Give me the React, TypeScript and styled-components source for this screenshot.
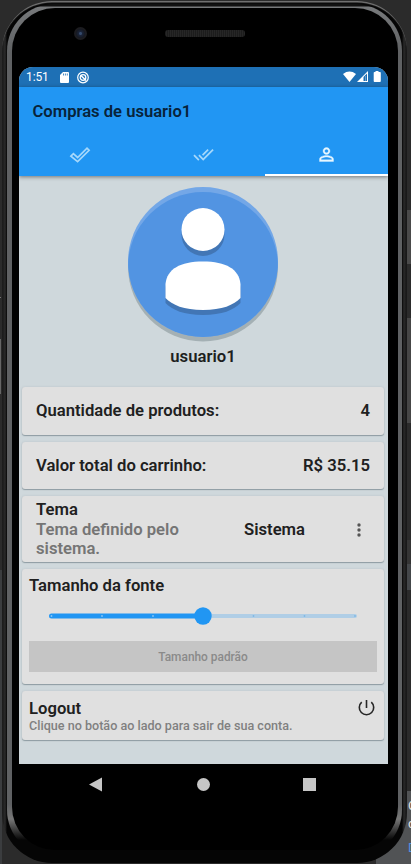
import React from "react";
import styled, { createGlobalStyle } from "styled-components";

const Global = createGlobalStyle`
  * { box-sizing: border-box; }
  body { margin: 0; background: #2b2b2b; font-family: Roboto, "Noto Sans", sans-serif; overflow: hidden; }
  svg { display: block; flex: none; }
`;
const Desk = styled.div`
  position: relative; width: 411px; height: 864px; overflow: hidden; background: #2b2b2b;
  padding: 1px 4px 0 2px;
`;
const Panel = styled.div`
  position: absolute; right: 0; bottom: 0; width: 35px; height: 73px; background: #515355;
`;
const PanelText = styled.span<{ $top: number; $blue?: boolean }>`
  position: absolute; left: 32px; top: ${p => p.$top}px; font-size: 13px; line-height: 16px;
  color: ${p => (p.$blue ? "#4f8fe0" : "#e0e0e0")};
`;
const EdgeStrip = styled.i<{ $side: "left" | "right"; $top: number; $h: number; $c: string; $w: number }>`
  position: absolute; ${p => p.$side}: 0; top: ${p => p.$top}px;
  width: ${p => p.$w}px; height: ${p => p.$h}px; background: ${p => p.$c};
`;
const Shell = styled.div`
  position: relative; width: 405px; height: 862px; padding: 3px 5px 5px 5px; border-radius: 50px;
  background: linear-gradient(90deg, #151515 0, #2b2b2b 3px, #050505 5px, #050505 400px, #2a2a2a 402px, #111 405px);
  box-shadow: inset 0 2px 1px -0.5px #777;
`;
const Rim = styled.div`
  height: 853px; padding: 4px 5px 7px 5px; border-radius: 47px;
  background: linear-gradient(180deg, #111 0, #111 2px, #77797b 3px, #5f6163 50px, #5f6163 800px, #777 815px, #050505 836px);
`;
const Face = styled.div`
  height: 842px; padding: 0 8px 0 7px; border-radius: 43px; background: #000;
  margin-right: -1px; display: flex; flex-direction: column;
`;
const Bezel = styled.div`
  height: 59px; flex: none; display: flex; padding: 19px 0 0 55px; gap: 78px; align-items: flex-start;
`;
const Camera = styled.i`
  width: 13px; height: 13px; border-radius: 50%; border: 2px solid #1c1c20;
  background: radial-gradient(circle, #34496b 0 1px, #1a2338 2px, #15171d 5px);
`;
const Speaker = styled.i`
  width: 80px; height: 7px; margin-top: 3px; border-radius: 3px;
  background: repeating-linear-gradient(90deg, #1c1c1c 0 1px, #262626 1px 2px);
`;
const Screen = styled.div`
  width: 369px; height: 697px; flex: none; overflow: hidden; border-radius: 14px 14px 0 0;
  background: #cfd8dc; display: flex; flex-direction: column;
`;
const Status = styled.div`
  height: 20px; flex: none; background: #1e70b5; color: #fff; font-size: 12px; display: flex;
  align-items: center; padding: 0 7px;
`;
const Clock = styled.span`width: 34px; letter-spacing: -.1px;`;
const StatusIcons = styled.div`margin-left: auto; display: flex; align-items: center;`;
const AppBar = styled.header`
  height: 89px; flex: none; background: #2196f3; box-shadow: 0 1px 4px rgba(0,0,0,.45);
  display: flex; flex-direction: column; z-index: 1;
`;
const Title = styled.h1`
  margin: 0; height: 48px; line-height: 49px; padding-left: 13.5px; font-size: 16.6px; font-weight: 600; color: #08233a;
`;
const Tabs = styled.nav`display: grid; grid-template-columns: 122.5px 123px 123.5px; flex: 1;`;
const Tab = styled.div<{ $on?: boolean }>`
  display: flex; align-items: center; justify-content: center; color: ${p => (p.$on ? "#e8f7ff" : "#a6d8fb")};
  border-bottom: 2px solid ${p => (p.$on ? "#fff" : "transparent")};
`;
const Profile = styled.section`
  height: 209px; padding: 11px 1px 0 0; display: flex; flex-direction: column; align-items: center;
`;
const Name = styled.strong`
  margin-top: 5px; font-size: 16.7px; line-height: 20px; font-weight: 600; color: #1d1f20;
`;
const Cards = styled.main`display: flex; flex-direction: column; gap: 7px; padding: 2px 4px 0 3px;`;
const Card = styled.section<{ $h: number; $pad: string }>`
  height: ${p => p.$h}px; padding: ${p => p.$pad}; border-radius: 3px; background: #e0e0e0;
  box-shadow: 0 1px 1px rgba(70,90,100,.45), 0 0 2px rgba(110,130,140,.25);
`;
const Row = styled.div`display: flex; align-items: center; justify-content: space-between; height: 100%;`;
const Label = styled.div<{ $muted?: boolean }>`
  font-size: 16.65px; line-height: 19.5px; font-weight: 600; color: ${p => (p.$muted ? "#757575" : "#202020")};
`;
const ThemeText = styled.div`width: 208px; padding-right: 38px;`;
const Current = styled(Label)`flex: 1;`;
const SliderBox = styled.div`height: 36px; margin-top: 2px; padding: 0 20px; display: flex; align-items: center;`;
const Wide = styled.button`
  display: block; width: 100%; height: 31px; border: 0; padding: 1px 0 0; background: #c5c5c5; color: #8a8a8a;
  font: 500 11.9px Roboto, sans-serif; margin-top: 7px;
`;
const Note = styled.div`font-size: 12.6px; line-height: 15px; font-weight: 500; color: #808080; white-space: nowrap;`;
const LogoutRow = styled.div`display: flex; justify-content: space-between; height: 19px;`;
const NavBar = styled.footer`
  width: 369px; height: 40px; display: grid; grid-template-columns: 154px 61px 151px; align-items: center; justify-items: center;
`;

const Avatar = () => (
  <svg width="150" height="155" viewBox="0 0 150 155">
    <defs><clipPath id="disc"><circle cx="75" cy="75" r="75" /></clipPath></defs>
    <circle cx="75" cy="79.500" r="75" fill="#a4b0b4" />
    <circle cx="75" cy="75" r="75" fill="#73a7e7" />
    <circle cx="75" cy="80" r="75" fill="#5294e2" clipPath="url(#disc)" />
    <circle cx="75" cy="47.500" r="21.500" fill="#4276b5" />
    <circle cx="75" cy="42.500" r="21.500" fill="#fff" />
    <path d="M37.500 116V102C37.500 88 53 79 75 79S112.500 88 112.500 102V116C106 123 94 128 75 128S44 123 37.500 116Z" fill="#4276b5" />
    <path d="M37.500 111V97C39 82 52 74.500 75 74.500S111 82 112.500 97V111C106 118 94 123 75 123S44 118 37.500 111Z" fill="#fff" />
  </svg>
);

export default function App() {
  return (
    <Desk>
      <Global />
      <Panel>
        <PanelText $top={7}>C</PanelText>
        <PanelText $top={25}>d</PanelText>
        <PanelText $top={49} $blue>D</PanelText>
      </Panel>
      <EdgeStrip $side="left" $top={297} $h={1} $c="#777" $w={1} />
      <EdgeStrip $side="left" $top={339} $h={55} $c="#666" $w={1} />
      <EdgeStrip $side="left" $top={570} $h={294} $c="#3b3d3f" $w={2} />
      <EdgeStrip $side="right" $top={210} $h={54} $c="#4a4a4a" $w={4} />
      <EdgeStrip $side="right" $top={318} $h={105} $c="#464646" $w={4} />
      <EdgeStrip $side="right" $top={540} $h={24} $c="#353535" $w={4} />
      <EdgeStrip $side="right" $top={564} $h={26} $c="#44474a" $w={4} />
      <Shell>
        <Rim>
          <Face>
            <Bezel><Camera /><Speaker /></Bezel>
            <Screen>
              <Status>
                <Clock>1:51</Clock>
                <svg width="9" height="11" viewBox="0 0 9 11"><path d="M3 0h5q1 0 1 1v9q0 1-1 1H1q-1 0-1-1V3Z" fill="#fff" /><path d="M3.500 1.500v2M5.400 1.500v2M7.300 1.500v2" stroke="#1e70b5" strokeWidth=".8" /></svg>
                <svg width="21" height="13" viewBox="-8 0 21 13" fill="none" stroke="#fff"><circle cx="6" cy="6.500" r="5.300" strokeWidth="1.200" /><circle cx="6" cy="6.500" r="2.800" strokeWidth="1.300" /><path d="m3.500 4 5.500 5.500" strokeWidth="1.500" /></svg>
                <StatusIcons>
                  <svg width="38" height="12" viewBox="0 0 38 12"><path d="M0 3Q6.500-1.800 13 3L6.500 11Z" fill="#fff" /><path d="M14 11 25 0v11Z" fill="#fff" /><path d="M20.500 6 24 2.500V10h-3.500Z" fill="#1e70b5" /><path d="M22.500 10V5" stroke="#81afd5" strokeWidth=".8" /><path d="M32.500 0h3v1H37q.8 0 .8.800V10q0 1-.8 1h-5.500q-.8 0-.8-1V1.800q0-.8.8-.8h1Z" fill="#fff" /></svg>
                </StatusIcons>
              </Status>
              <AppBar>
                <Title>Compras de usuario1</Title>
                <Tabs>
                  <Tab><svg width="22" height="20" viewBox="0 0 22 20" fill="none" stroke="currentColor" strokeWidth="1.700"><path d="m1.900 11.200 2.500-2.500L8.600 12.500 18 3.200 20.100 5.300 8.600 16.700Z" /></svg></Tab>
                  <Tab><svg width="21" height="21" viewBox="0 0 24 24" fill="currentColor"><path d="m18 7-1.410-1.410-6.340 6.340 1.410 1.410L18 7zm4.240-1.410L11.660 16.170 7.480 12l-1.410 1.410L11.660 19l12-12-1.420-1.410zM.41 13.410 6 19l1.410-1.410L1.830 12 .41 13.410z" /></svg></Tab>
                  <Tab $on><svg width="21" height="21" viewBox="0 0 24 24" fill="currentColor" stroke="currentColor" strokeWidth=".4"><path d="M12 5.900c1.160 0 2.100.94 2.100 2.100s-.94 2.100-2.100 2.100S9.900 9.160 9.900 8s.94-2.100 2.100-2.100m0 9c2.970 0 6.100 1.460 6.100 2.100v1.100H5.900V17c0-.64 3.130-2.100 6.100-2.100M12 4C9.790 4 8 5.790 8 8s1.790 4 4 4 4-1.790 4-4-1.790-4-4-4zm0 9c-2.670 0-8 1.340-8 4v3h16v-3c0-2.660-5.330-4-8-4z" /></svg></Tab>
                </Tabs>
              </AppBar>
              <Profile><Avatar /><Name>usuario1</Name></Profile>
              <Cards>
                <Card $h={48} $pad="0 14px"><Row><Label>Quantidade de produtos:</Label><Label>4</Label></Row></Card>
                <Card $h={47} $pad="0 14px"><Row><Label>Valor total do carrinho:</Label><Label>R$ 35.15</Label></Row></Card>
                <Card $h={66} $pad="1px 14px 0">
                  <Row>
                    <ThemeText><Label>Tema</Label><Label $muted>Tema definido pelo sistema.</Label></ThemeText>
                    <Current>Sistema</Current>
                    <svg width="18" height="14" viewBox="-2 0 18 14" fill="#555"><circle cx="5" cy="2" r="1.700" /><circle cx="5" cy="7" r="1.700" /><circle cx="5" cy="12" r="1.700" /></svg>
                  </Row>
                </Card>
                <Card $h={115} $pad="7px 7px">
                  <Label>Tamanho da fonte</Label>
                  <SliderBox>
                    <svg width="308" height="20" viewBox="0 0 308 20">
                      <rect x="1" y="8" width="307" height="4" rx="2" fill="#b0cee6" />
                      <rect x="0" y="7.500" width="155" height="5" rx="2.500" fill="#2196f3" />
                      <g fill="#8cc5f3"><circle cx="2.500" cy="10" r=".9" /><circle cx="53" cy="10" r=".9" /><circle cx="104" cy="10" r=".9" /></g>
                      <g fill="#7fb8e5"><circle cx="204.500" cy="10" r=".9" /><circle cx="255.500" cy="10" r=".9" /><circle cx="306" cy="10" r=".9" /></g>
                      <circle cx="154" cy="10" r="8.700" fill="#2196f3" />
                    </svg>
                  </SliderBox>
                  <Wide>Tamanho padrão</Wide>
                </Card>
                <Card $h={49} $pad="8px 7px">
                  <LogoutRow>
                    <Label>Logout</Label>
                    <svg width="21" height="18" viewBox="0 0 21 18" fill="none" stroke="#262626" strokeWidth="1.600"><path d="M10.500 1v8M5.700 3.200a7.200 7.200 0 1 0 9.600 0" /></svg>
                  </LogoutRow>
                  <Note>Clique no botão ao lado para sair de sua conta.</Note>
                </Card>
              </Cards>
            </Screen>
            <NavBar>
              <svg width="14" height="15" viewBox="0 0 14 15"><path d="M0 7.500 13 .5v14Z" fill="#c6c6c6" /></svg>
              <svg width="13" height="13" viewBox="0 0 13 13"><circle cx="6.500" cy="6.500" r="6.500" fill="#c6c6c6" /></svg>
              <svg width="13" height="13" viewBox="0 0 13 13"><rect width="13" height="13" fill="#c6c6c6" /></svg>
            </NavBar>
          </Face>
        </Rim>
      </Shell>
    </Desk>
  );
}
